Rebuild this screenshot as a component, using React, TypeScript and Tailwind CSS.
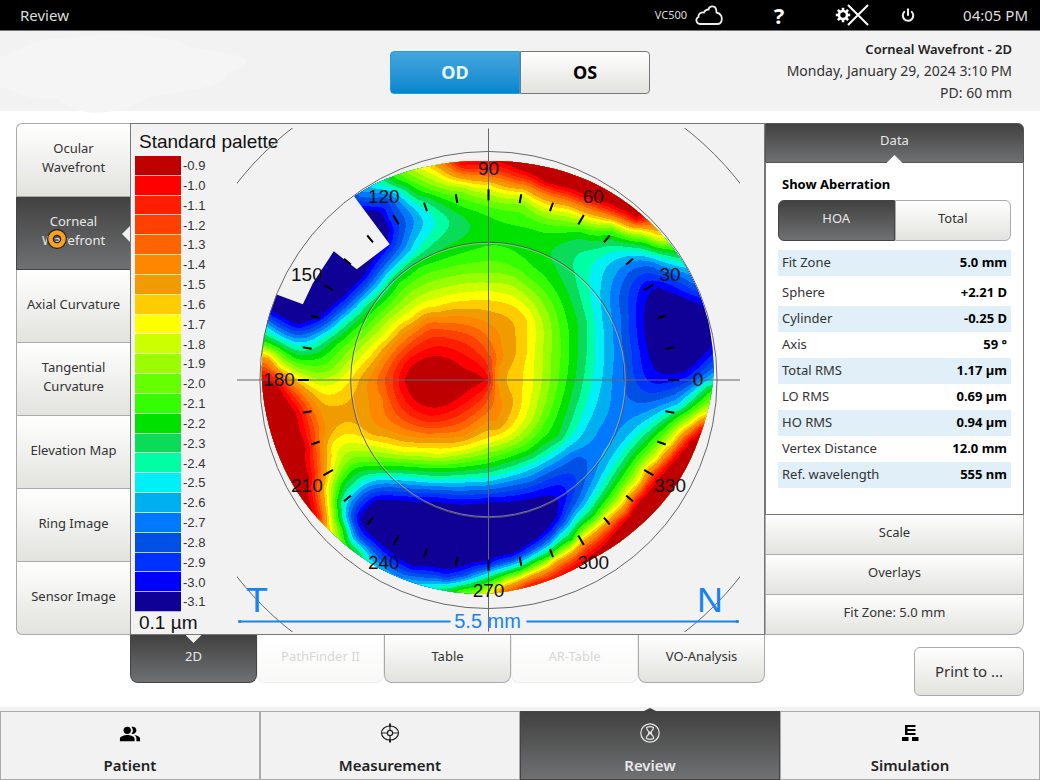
import React, { useMemo, useState } from 'react';
import clsx from 'clsx';
import { Power } from 'lucide-react';
import { MdPeopleAlt } from 'react-icons/md';

const PALETTE = [
  '#be0000', '#ff0000', '#ff1e00', '#ff4000', '#ff6400', '#ff8700', '#f09b00', '#ffcc00',
  '#ffff00', '#ccff00', '#99ff00', '#66ff00', '#33ff00', '#00e100', '#0adc5a', '#00ffa5',
  '#00f0f5', '#00aff0', '#0078ff', '#0050e6', '#0032ff', '#0000ff', '#0f0096',
];

// Wavefront samples: [palette step, x, y, x, y, ...], origin at the pupil centre, y down
const SAMPLES: number[][] = [
  [-3, 191, 100, 158, 140],
  [-2, 58, -208, -59, 8, -209, 40, 208, 70],
  [-1, 91, -196, 125, -182, -192, 87, -40, 2, 200, 80, 176, 118, 145, -171],
  [0, 0, 0, -222, 0, 41, 210, -25, 0, 30, -213, 95, 189],
  [0.5, 58, -197, 91, -187, 114, -178, 148, -161, 213, 50, 191, 73, 171, 97, 151, 120, 134, 143, 118, 163, 88, 187, -26, -217],
  [0.5, -84, 0, -59, 27, -59, -23, -79, -13, -26, -12, -12, -7, -26, 15, -209, 7, -192, 33, -182, 67, -179, 97],
  [0.5, 74, -193, 102, -183, 131, -171, 202, 61, 181, 85, 161, 108, 142, 132, 126, 153, 103, 175],
  [1, 0, -217, -176, 123, -171, 137, -9, 9, -88, 0],
  [1.6, -59, -33, -26, -27, -59, 37],
  [2.4, -9, -24, -94, 0, -26, 32],
  [3, -59, -47, -26, -43, -59, 45, -101, 0, -9, 25, 3, -18],
  [4, 0, -205, 58, -188, 91, -177, 124, -165, 204, 52, 164, 93, 139, 132, 114, 153, 74, 184, 18, 211, -26, -208, -59, -55, -9, -45, -107, 0, -59, 52, -26, 46, -176, 36, -172, 63, 1, 24],
  [4, 28, -198, 75, -183, 108, -171, 140, -159, 184, 73, 150, 114, 94, 169, 46, 199],
  [5, 0, -50, -26, -60, -116, 0, -9, 43, -167, 103, -109, 20, -222, -20],
  [5.5, 8, -50, 12, -33, -59, -63, -59, 58, -26, 57, 0, 40, 9, 45, -166, 40, 10, 14, 8, -12],
  [6, 0, -63, 22, -27, 21, 20, -126, 0, -116, 53, -92, 57, -152, 33, -159, 50, -85, -50, -100, -35, 8, 1],
  [7, 0, -75, 34, -27, 34, -60, 24, -70, 28, 0, 0, 53, -52, 65, -136, 5, -192, 0, -166, 20, -139, 50, -159, 63, -52, -70, -162, 130],
  [8, 0, -195, 34, -188, 81, -170, 124, -158, 151, -150, 171, -142, 221, 32, 204, 43, 184, 62, 168, 80, 151, 102, 134, 123, 114, 142, 91, 160, 64, 180, 38, 195, 18, 203, -52, -207],
  [8, 0, -85, 43, -60, 43, -27, 41, 0, 33, 38, 0, 62, -26, -83, -52, -77, -79, -63, -102, -43, -119, -27, -142, -2, -209, -13, -178, 4, -156, 67, -139, 57, -116, 63, -86, 70, -49, 72, -162, 107],
  [9, 0, -93, 49, -60, 50, -27, 49, 0, 24, 57, -229, -30, -52, 77, -192, -6],
  [10, 0, -183, 0, -102, 58, -60, 58, -27, 58, 0, 48, 40, 0, 69, -72, -87, 24, -100, -156, 137, -26, -192, -176, -4],
  [11, 0, -113, 66, -60, 68, -27, 66, 0, 0, 76, -79, -203, -59, -193, -52, 83, -159, -13, -182, -13, -154, 113, -149, 97, -126, 80, -126, -47, 124, -152, 34, -173],
  [12, 0, -170, 0, -127, 73, -60, 77, -27, 74, 0, 34, -160, 41, -107, -26, -177, 58, 45, 158, -139, -152, 130, -26, 210, -147, 150],
  [13, 0, -150, 41, -145, 91, -147, 84, -60, 85, -27, 83, 0, 59, -112, 66, 55, 41, 73, 0, 86, 131, -141, 178, -130, -92, -198, -72, -188, -32, -172, -12, -163],
  [13, 221, 9, 191, 34, 171, 50, 151, 70, 134, 93, 121, 113, 104, 137, 84, 160, 61, 177, 34, 190, 8, 198, -26, -134, -72, -117, -92, -100, -116, -73, -136, -53, -156, -37, -192, -23, -226, -40, -146, 103, -144, 153, -132, 90, -109, 89, -52, 90],
  [14, 94, -60, 94, -27, 91, 0, 108, -135, 74, -126, 80, -103, -59, -180, -29, -160, -42, -142, 73, 58, 0, 90, -52, 95, -129, 173],
  [15, 103, -60, 103, -27, 99, 0, 124, -132, 191, -120, 94, -103, 0, 95, 41, 82, -86, -190, -46, -160, -56, -143, -147, 123, -134, 107, -42, 207],
  [16, 109, -60, 111, -27, 109, 0, 141, -127, 108, -100, 79, 63, 0, 100, 41, 87, -109, -193, -59, -160, -67, -143, -52, 102, -109, 98, -126, 170, -52, 205, 226, 0],
  [16, 191, 27, 164, 40, 144, 57, 128, 77, 118, 93, 104, 117, 88, 137, 71, 155, 54, 171, 31, 183, 4, 192, -76, -127, -99, -107, -126, -78, -146, -60, -169, -43, -192, -36, -222, -52, -137, 113],
  [17, 119, -60, 121, -27, 119, 0, 151, -123, 198, -110, 119, -100, 90, 66, 41, 93, -99, -188, -71, -160, -77, -142, -142, 137, -129, 110, -136, 157, 218, 0],
  [18, 129, -60, 131, -27, 129, 0, 131, -100, 164, -117, 131, 20, 120, 55, 105, 85, 94, 117, 41, 100, 0, 107, -79, -163, -52, 108, -109, 106, -76, 198, -126, -185],
  [19, 138, -60, 140, -27, 142, 0, 139, -97, 171, -107, 204, -93, 90, 80, 81, 130, 0, 113, -89, -163, -89, -140, -109, 177, -26, 197, 158, 18, 204, 2],
  [20, 144, -60, 148, -27, 146, -88, 81, 100, 64, 153, 41, 110, 24, 179, -99, -163, -102, -177, -116, -175, -52, 115, -126, 123, -126, 157, -42, 198, 184, 5],
  [21, 152, -60, 156, -27, 164, -2, 158, -95, 211, -80, 74, 113, 0, 119, -99, -138, -131, 137, -102, 172, 0, 184],
  [21.5, 171, -93, 221, -67, 223, -33, 198, -8, 164, -15, 71, 122, 69, 138, 48, 160, 31, 171, 24, 122, 41, 119, -52, 122, -104, -160, -126, -103, -146, -83, -169, -63, -192, -55, -216, -67, -129, 143, -112, 120, -76, 187],
  [25, 191, -53, -112, -158, -176, -80, -142, -107, 24, 147, -92, 150, -59, 155],
];

// Edge of the measured area every 15 degrees, clockwise from the right
const RIM = [225, 219, 215, 210, 207, 210, 214, 216, 218, 219, 222, 224, 227, 229, 229, 229, 227, 222, 219, 221, 224, 226, 228, 228];

const STEP = 4;
const EXTENT = 232;

// Radial interpolation through all samples, returns the value at any point
function fitSurface() {
  const pts: number[][] = [];
  SAMPLES.forEach(([v, ...c]) => {
    for (let i = 0; i < c.length; i += 2) pts.push([c[i], c[i + 1], v]);
  });
  const n = pts.length;
  const m = pts.map((p, i) => {
    const row = pts.map((q, j) => (i === j ? 1.5 : -Math.hypot(p[0] - q[0], p[1] - q[1])));
    return [...row, 1, p[2]];
  });
  m.push([...pts.map(() => 1), 0, 0]);

  for (let c = 0; c <= n; c++) {
    let best = c;
    for (let r = c + 1; r <= n; r++) if (Math.abs(m[r][c]) > Math.abs(m[best][c])) best = r;
    [m[c], m[best]] = [m[best], m[c]];
    for (let r = c + 1; r <= n; r++) {
      const f = m[r][c] / m[c][c];
      if (!f) continue;
      for (let k = c; k <= n + 1; k++) m[r][k] -= f * m[c][k];
    }
  }
  const w = new Array(n + 1).fill(0);
  for (let r = n; r >= 0; r--) {
    let s = m[r][n + 1];
    for (let k = r + 1; k <= n; k++) s -= m[r][k] * w[k];
    w[r] = s / m[r][r];
  }
  return (x: number, y: number) => {
    let s = w[n];
    for (let i = 0; i < n; i++) s -= w[i] * Math.hypot(x - pts[i][0], y - pts[i][1]);
    return s;
  };
}

// One path per palette step, each covering everything at or below that step
function buildBands() {
  const value = fitSurface();
  const size = (EXTENT * 2) / STEP;
  const grid: number[][] = [];
  for (let j = 0; j <= size; j++) {
    grid.push([]);
    for (let i = 0; i <= size; i++) grid[j].push(value(i * STEP - EXTENT, j * STEP - EXTENT));
  }

  const bands: { color: string; d: string }[] = [];
  for (let level = PALETTE.length - 2; level >= 0; level--) {
    const t = level + 0.5;
    let d = '';
    for (let j = 0; j < size; j++) {
      const y = j * STEP - EXTENT;
      let run: number | null = null;
      for (let i = 0; i <= size; i++) {
        const x = i * STEP - EXTENT;
        const corners = i < size
          ? [[x, y, grid[j][i]], [x + STEP, y, grid[j][i + 1]], [x + STEP, y + STEP, grid[j + 1][i + 1]], [x, y + STEP, grid[j + 1][i]]]
          : [];
        const inside = corners.filter((c) => c[2] < t).length;
        if (inside === 4) {
          if (run === null) run = x;
          continue;
        }
        if (run !== null) {
          d += `M${run} ${y}H${x}V${y + STEP}H${run}Z`;
          run = null;
        }
        if (!inside) continue;
        const poly: string[] = [];
        corners.forEach((a, k) => {
          const b = corners[(k + 1) % 4];
          if (a[2] < t) poly.push(`${a[0]} ${a[1]}`);
          if (a[2] < t !== b[2] < t) {
            const f = (t - a[2]) / (b[2] - a[2]);
            poly.push(`${(a[0] + f * (b[0] - a[0])).toFixed(2)} ${(a[1] + f * (b[1] - a[1])).toFixed(2)}`);
          }
        });
        d += `M${poly.join('L')}Z`;
      }
    }
    bands.push({ color: PALETTE[level], d });
  }
  return bands;
}

function rimPath() {
  const pts: string[] = [];
  for (let a = 0; a < 360; a += 3) {
    const i = Math.floor(a / 15);
    const f = (a % 15) / 15;
    const r = RIM[i] * (1 - f) + RIM[(i + 1) % 24] * f;
    const rad = (a * Math.PI) / 180;
    pts.push(`${(r * Math.cos(rad)).toFixed(1)} ${(r * Math.sin(rad)).toFixed(1)}`);
  }
  return `M${pts.join('L')}Z`;
}

const WavefrontMap: React.FC = () => {
  const bands = useMemo(buildBands, []);
  const rim = useMemo(rimPath, []);
  const ticks = Array.from({ length: 36 }, (_, i) => i * 10);

  return (
    <svg viewBox="-252 -252 504 504" className="h-[504px] w-full" role="img" aria-label="Corneal wavefront map" fontFamily="Liberation Sans, Arial, sans-serif">
      <defs>
        <clipPath id="rim"><path d={rim} /></clipPath>
      </defs>
      <g clipPath="url(#rim)" shapeRendering="crispEdges">
        <rect x={-232} y={-232} width={464} height={464} fill={PALETTE[22]} />
        {bands.map((b) => <path key={b.color} d={b.d} fill={b.color} />)}
      </g>
      <path d="M-134-183L-99-136L-132-111L-155-129L-176-97L-186-76L-213-86L-245-110L-160-240Z" fill="#f2f2f2" />

      <g fill="none" stroke="#666" strokeWidth={1}>
        <circle r={320} />
        <circle r={229} />
        <circle r={138} stroke="#555" />
        <circle r={137} stroke="#ddd" strokeOpacity={0.5} />
        <path d="M-252 0H252M0-252V252" />
      </g>

      <g stroke="#000" strokeWidth={2}>
        {ticks.map((a) => (
          <line key={a} x1={180} x2={a % 30 ? 189 : 191} y1={0} y2={0} transform={`rotate(${a})`} />
        ))}
      </g>
      <g fontSize={19} textAnchor="middle" fill="#111">
        {ticks.filter((a) => a % 30 === 0).map((a) => {
          const rad = (a * Math.PI) / 180;
          return <text key={a} x={Math.round(210 * Math.cos(rad))} y={Math.round(6 - 211 * Math.sin(rad))}>{a}</text>;
        })}
      </g>

      <g fill="#1684f0">
        <text x={-232} y={232} fontSize={36} textAnchor="middle">T</text>
        <text x={222} y={232} fontSize={36} textAnchor="middle">N</text>
        <text x={-1} y={248} fontSize={20} textAnchor="middle">5.5 mm</text>
        <path d="M-251 241H-38V243H-251ZM38 241H251V243H38Z" />
        <circle cx={-249} cy={242} r={1.5} />
        <circle cx={249} cy={242} r={1.5} />
      </g>
    </svg>
  );
};

const VIEWS = ['Ocular Wavefront', 'Corneal Wavefront', 'Axial Curvature', 'Tangential Curvature', 'Elevation Map', 'Ring Image', 'Sensor Image'];

const TABS = [
  { label: '2D' },
  { label: 'PathFinder II', disabled: true },
  { label: 'Table' },
  { label: 'AR-Table', disabled: true },
  { label: 'VO-Analysis' },
];

const ROWS = [
  ['Sphere', '+2.21 D'],
  ['Cylinder', '-0.25 D'],
  ['Axis', '59 °'],
  ['Total RMS', '1.17 µm'],
  ['LO RMS', '0.69 µm'],
  ['HO RMS', '0.94 µm'],
  ['Vertex Distance', '12.0 mm'],
  ['Ref. wavelength', '555 nm'],
];

const LIGHT = 'bg-linear-to-b from-white to-[#e2e2de] text-[#333]';
const DARK = 'bg-linear-to-b from-[#414141] to-[#707173] text-[#e8e8e8]';

const GearIcon = () => (
  <svg width="16" height="16" viewBox="0 0 16 16" fill="none" stroke="#fff">
    <circle cx="8" cy="8" r="4" strokeWidth="2.6" />
    {[0, 45, 90, 135, 180, 225, 270, 315].map((a) => (
      <path key={a} d="M8 0.8V3.5" strokeWidth="2.6" transform={`rotate(${a} 8 8)`} />
    ))}
  </svg>
);

const TargetIcon = () => (
  <svg width="20" height="20" viewBox="0 0 20 20" fill="none" stroke="#222" strokeWidth="1.2">
    <ellipse cx="10" cy="10" rx="8.5" ry="7" />
    <circle cx="10" cy="10" r="2.6" />
    <path d="M2 10H7.4M12.6 10H18M10 3V7.4M10 12.6V17" />
    <path d="M10 0.5V4M10 16V19.5" strokeWidth="2" />
  </svg>
);

const ReviewIcon = () => (
  <svg width="20" height="20" viewBox="0 0 20 20" fill="none" stroke="#e8e8e8" strokeWidth="1.2">
    <circle cx="10" cy="10" r="9.2" />
    <path d="M6.5 4.5Q10 2.8 13.5 4.5Q13.5 6.5 10.8 9.2V10.8Q14 13.5 13.5 15.5Q10 17.2 6.5 15.5Q6 13.5 9.2 10.8V9.2Q6.5 6.5 6.5 4.5Z" />
    <path d="M8.2 10H11.8" strokeWidth="2" />
  </svg>
);

const ChartIcon = () => (
  <svg width="20" height="20" viewBox="0 0 20 20" fill="#000">
    <path d="M5 2H15.500V4H7.500V6H15.500V8H7.500V10H15.500V12H5Z" />
    <rect x="2" y="14" width="6.500" height="4" />
    <rect x="12" y="14" width="6.500" height="4" />
  </svg>
);

const NAV = [
  { label: 'Patient', icon: <MdPeopleAlt size={22} color="#000" /> },
  { label: 'Measurement', icon: <TargetIcon /> },
  { label: 'Review', icon: <ReviewIcon /> },
  { label: 'Simulation', icon: <ChartIcon /> },
];

export default function App() {
  const [eye, setEye] = useState('OD');
  const [view, setView] = useState('Corneal Wavefront');
  const [tab, setTab] = useState('2D');
  const [aberration, setAberration] = useState('HOA');
  const [page, setPage] = useState('Review');

  return (
    <div className="flex min-h-screen flex-col bg-white font-['Noto_Sans',sans-serif] text-[13px] text-[#333]">
      {/* Status bar */}
      <div className="flex h-[31px] items-center border-b border-[#777] bg-black pr-3 pl-5 text-[#ddd]">
        <span className="text-[15px]">Review</span>
        <span className="ml-auto text-[11px]">VC500</span>
        <svg width="28" height="22" viewBox="0 0 28 22" className="ml-2" fill="none" stroke="#eee" strokeWidth="1.8">
          <path d="M5 20C1 19.500 0 14.500 3.500 13C3 9.500 6.500 8 9 8.500C10 6 12 5.500 13.500 5.500C14 2 19.500 1 21 5C21.500 7 21.500 8 21.500 8.500C26 9.500 27.500 13 26.500 17C26 19 24.500 20 22.500 20Z" />
        </svg>
        <button aria-label="Help" className="ml-12 w-4 text-[22px] leading-7 font-bold text-white">?</button>
        <button aria-label="Settings" className="ml-12 flex items-center text-white">
          <GearIcon />
          <svg width="22" height="22" viewBox="0 0 22 22" className="-ml-1" stroke="#fff" strokeWidth="2">
            <path d="M1 1L21 21M21 1L1 21" />
          </svg>
        </button>
        <button aria-label="Power" className="ml-8 text-[#eee]"><Power size={14} strokeWidth={3.5} /></button>
        <span className="ml-12 text-[15px]">04:05 PM</span>
      </div>

      {/* Exam header */}
      <header className="relative grid h-20 grid-cols-[1fr_260px_1fr] items-center bg-[#f2f2f2]">
        <svg viewBox="0 0 250 84" className="absolute top-0 left-0 h-[84px] w-[250px]" fill="#f5f5f5">
          <path d="M0 26C20 22 30 6 62 8C100 2 160 0 192 16C215 22 240 22 247 30C240 40 228 38 226 46C218 58 180 60 150 66C130 80 80 92 58 68C30 70 20 62 0 56Z" />
        </svg>
        <div className="col-start-2 mt-0.5 flex h-[43px]">
          <button onClick={() => setEye('OD')} className={clsx('flex-1 rounded-l border text-[18px] font-bold', eye === 'OD' ? 'border-[#2b9bd6] bg-linear-to-b from-[#42a6dd] to-[#0086cf] text-[#e9f8ff]' : 'border-[#777] bg-linear-to-b from-white to-[#e2e2de] text-black')}>OD</button>
          <button onClick={() => setEye('OS')} className={clsx('flex-1 rounded-r border text-[18px] font-bold', eye === 'OS' ? 'border-[#2b9bd6] bg-linear-to-b from-[#42a6dd] to-[#0086cf] text-[#e9f8ff]' : 'border-[#777] bg-linear-to-b from-white to-[#e2e2de] text-black')}>OS</button>
        </div>
        <div className="pr-7 text-right text-[14px] leading-[22px]">
          <h1 className="text-[13px] font-semibold text-[#222]">Corneal Wavefront - 2D</h1>
          <p>Monday, January 29, 2024 3:10 PM</p>
          <p>PD: 60 mm</p>
        </div>
      </header>

      <main className="grid grid-cols-[114px_1fr_259px] px-4 pt-3">
        {/* Map types */}
        <nav className="flex flex-col">
          {VIEWS.map((v) => (
            <button
              key={v}
              onClick={() => setView(v)}
              className={clsx('relative flex-1 border-b border-l pb-1 leading-[19px] first:rounded-tl-md first:border-t last:rounded-bl-md', v === view ? DARK : LIGHT, v === view ? 'border-[#444]' : 'border-[#aaa]')}
            >
              {v.includes('Wavefront') || v.startsWith('Tang') ? v.split(' ').map((s) => <span key={s} className="block">{s}</span>) : v}
              {v === view && (
                <>
                  <span className="absolute top-[29px] right-0 h-4 w-2 bg-[#f2f2f2] [clip-path:polygon(100%_0,100%_100%,0_50%)]" />
                  <svg width="20" height="20" viewBox="0 0 20 20" className="absolute top-8 left-[30px]" fill="none">
                    <circle cx="10" cy="10" r="6.500" stroke="#222" strokeWidth="7" />
                    <circle cx="10" cy="10" r="6.500" stroke="#f7a022" strokeWidth="4.500" />
                  </svg>
                </>
              )}
            </button>
          ))}
        </nav>

        {/* Map */}
        <section className="flex h-[512px] border border-[#777] bg-[#f2f2f2] font-['Liberation_Sans',Arial,sans-serif]">
          <div className="flex w-[106px] shrink-0 flex-col pt-1 pl-1 text-[#111]">
            <h2 className="pl-1 text-[19px] leading-7 whitespace-nowrap">Standard palette</h2>
            <ul className="flex h-[456px] flex-col">
              {PALETTE.map((c, i) => (
                <li key={c} className="flex flex-1 items-center gap-0.5 text-[13px] text-[#333]">
                  <span className="h-full w-[46px] border-b border-white/70" style={{ backgroundColor: c }} />
                  -{(0.9 + i * 0.1).toFixed(1)}
                </li>
              ))}
            </ul>
            <p className="pl-1 text-[19px] leading-[22px]">0.1 µm</p>
          </div>
          <div className="mr-6 flex-1 pt-1"><WavefrontMap /></div>
        </section>

        {/* Data panel */}
        <aside className="flex flex-col">
          <button className={clsx('relative h-10 rounded-tr-md border border-[#555] pb-1', DARK)}>
            Data
            <span className="absolute bottom-[-1px] left-1/2 h-2 w-4 -translate-x-1/2 bg-white [clip-path:polygon(50%_0,100%_100%,0_100%)]" />
          </button>
          <div className="flex-1 border-x border-b border-[#777] px-3 pt-3">
            <h3 className="pl-1 leading-[18px] font-bold text-black">Show Aberration</h3>
            <div className="mt-[7px] flex h-[41px]">
              {['HOA', 'Total'].map((a) => (
                <button key={a} onClick={() => setAberration(a)} className={clsx('flex-1 border pb-1 first:rounded-l-md last:rounded-r-md', a === aberration ? DARK : LIGHT, a === aberration ? 'border-[#444]' : 'border-[#aaa]')}>{a}</button>
              ))}
            </div>
            <table className="mt-[9px] w-full">
              <tbody>
                <tr className="h-[26px] bg-[#e0eff8]">
                  <th scope="row" className="pl-1 text-left font-normal">Fit Zone</th>
                  <td className="pr-1 text-right font-bold text-black">5.0 mm</td>
                </tr>
              </tbody>
            </table>
            <table className="mt-1 w-full">
              <tbody>
                {ROWS.map(([k, v]) => (
                  <tr key={k} className="h-[26px] even:bg-[#e0eff8]">
                    <th scope="row" className="pl-1 text-left font-normal">{k}</th>
                    <td className="pr-1 text-right font-bold text-black">{v}</td>
                  </tr>
                ))}
              </tbody>
            </table>
          </div>
          {['Scale', 'Overlays', 'Fit Zone: 5.0 mm'].map((s) => (
            <button key={s} className={clsx('h-10 border-x border-b border-[#aaa] pb-1 last:rounded-br-xl', LIGHT)}>{s}</button>
          ))}
        </aside>

        {/* Map tabs */}
        <div className="col-start-2 grid h-12 grid-cols-5">
          {TABS.map((t) => (
            <button
              key={t.label}
              disabled={t.disabled}
              onClick={() => setTab(t.label)}
              className={clsx('relative rounded-b-lg border-x border-b pb-1', t.label === tab ? DARK : LIGHT, t.label === tab ? 'border-[#444]' : 'border-[#aaa]', t.disabled && 'opacity-20')}
            >
              {t.label}
              {t.label === tab && <span className="absolute top-0 left-1/2 h-2 w-4 -translate-x-1/2 bg-[#f2f2f2] [clip-path:polygon(0_0,100%_0,50%_100%)]" />}
            </button>
          ))}
        </div>
        <button className={clsx('mt-3 h-[49px] w-[110px] justify-self-end rounded-md border border-[#aaa] text-[15px]', LIGHT)}>Print to ...</button>
      </main>

      {/* Main navigation */}
      <footer className="mt-auto grid h-[73px] grid-cols-4 bg-[#f2f2f2] pt-1">
        {NAV.map((n) => (
          <button key={n.label} onClick={() => setPage(n.label)} className={clsx('relative flex flex-col items-center justify-between border px-2 pt-[11px] pb-[3px] text-[15px] font-semibold', n.label === page ? DARK : 'text-[#222]', n.label === page ? 'border-[#444]' : 'border-[#aaa]')}>
            {n.label === page && <span className="absolute -top-1 left-1/2 h-1 w-4 -translate-x-1/2 bg-[#414141] [clip-path:polygon(50%_0,100%_100%,0_100%)]" />}
            {n.icon}
            {n.label}
          </button>
        ))}
      </footer>
    </div>
  );
}
